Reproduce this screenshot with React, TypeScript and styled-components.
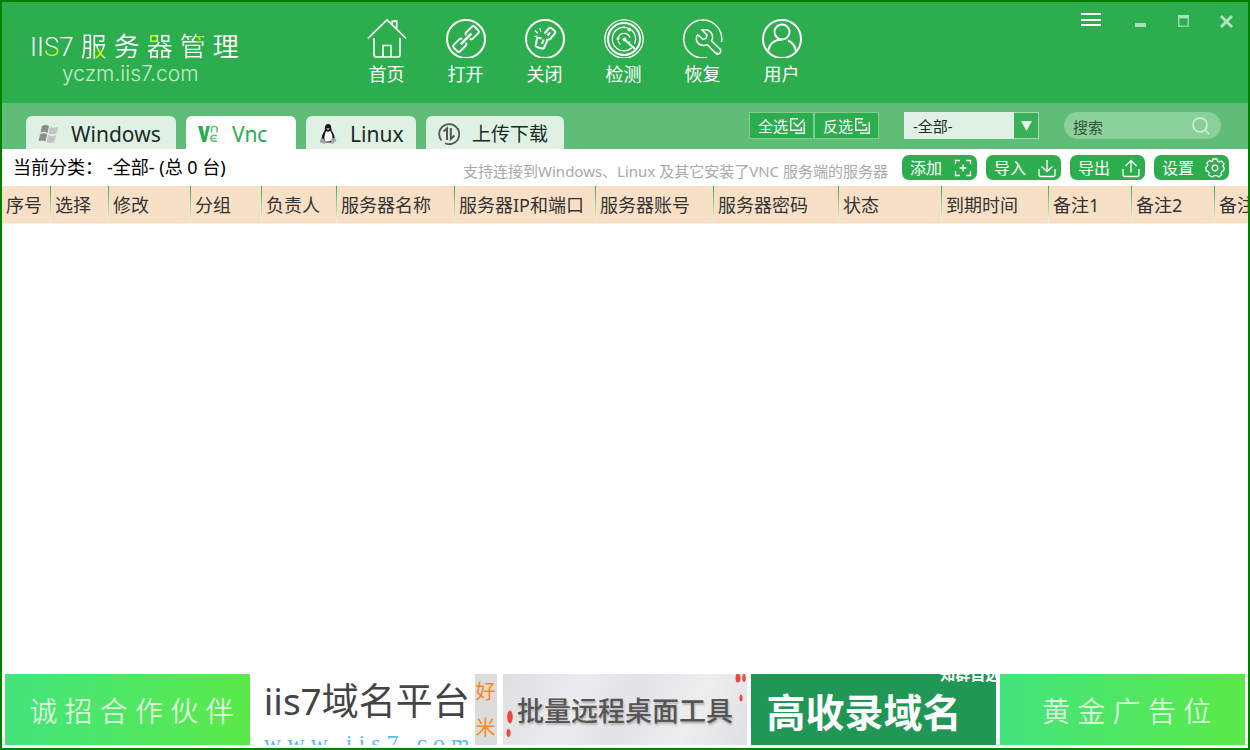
import React, { useState } from "react";
import styled, { createGlobalStyle, css } from "styled-components";

const GREEN = "#2dae4e";
const MINT = "#dff1e4";

const GlobalStyle = createGlobalStyle`
  *, *::before, *::after { box-sizing: border-box; }
  body { margin: 0; background: #fff; }
  body, button, input, select, table {
    font-family: "Noto Sans", "Noto Sans CJK SC", sans-serif;
  }
  button { border: 0; padding: 0; background: none; color: inherit; cursor: pointer; }
  svg { display: block; flex: none; }
`;

const Frame = styled.div`
  display: flex;
  flex-direction: column;
  min-height: 100vh;
  border: 2px solid #008000;
  overflow: hidden;
`;

/* ---------- header ---------- */

const Header = styled.header`
  display: flex;
  align-items: flex-start;
  height: 101px;
  background: ${GREEN};
  color: #fff;
`;

const Brand = styled.div`
  flex: none;
  width: 345px;
  padding: 26px 0 0 28px;
`;

const BrandName = styled.div`
  display: flex;
  gap: 7px;
  font-family: Roboto, "Noto Sans CJK SC", sans-serif;
  font-size: 26px;
  font-weight: 350;
  line-height: 38px;
  white-space: nowrap;
`;

const Accent = styled.span<{ $fill: string }>`
  background: ${(p) => p.$fill};
  background-clip: text;
  -webkit-background-clip: text;
  color: transparent;
`;

const BrandUrl = styled.div`
  padding-left: 32px;
  font-family: Inter, sans-serif;
  font-size: 21px;
  font-weight: 300;
  line-height: 16px;
  color: #c4ecce;
`;

const Nav = styled.nav`
  display: flex;
  padding-top: 16px;
`;

const NavButton = styled.button`
  display: flex;
  flex-direction: column;
  align-items: center;
  gap: 3px;
  width: 79px;
  font-size: 18px;
  line-height: 26px;
`;

const WindowControls = styled.div`
  display: flex;
  margin-left: auto;
`;

const ControlButton = styled.button<{ $wide?: boolean }>`
  display: flex;
  justify-content: center;
  width: ${(p) => (p.$wide ? 57 : 43)}px;
  padding-top: 8px;
`;

/* ---------- tab bar ---------- */

const TabBar = styled.div`
  display: flex;
  align-items: flex-end;
  height: 46px;
  padding: 0 27px 0 24px;
  background: #5fbd78;
`;

const Tabs = styled.div`
  display: flex;
  gap: 10px;
`;

const Tab = styled.button<{ $active: boolean; $width: number; $size?: number }>`
  display: flex;
  align-items: center;
  gap: 12px;
  width: ${(p) => p.$width}px;
  height: 33px;
  padding: 3px 0 0 12px;
  border-radius: 6px 6px 0 0;
  background: ${(p) => (p.$active ? "#fff" : MINT)};
  color: ${(p) => (p.$active ? GREEN : "#1c2b22")};
  font-size: ${(p) => p.$size ?? 21}px;
  line-height: 30px;
  white-space: nowrap;
`;

const Filters = styled.div`
  display: flex;
  align-items: center;
  gap: 25px;
  margin: 0 0 10px auto;
`;

const PickGroup = styled.div`
  display: flex;
`;

const PickButton = styled.button`
  display: flex;
  align-items: center;
  justify-content: center;
  gap: 1px;
  width: 65px;
  height: 27px;
  border: 1px solid #7fcb92;
  background: ${GREEN};
  color: #fff;
  font-size: 15px;
  line-height: 20px;
`;

const SelectBox = styled.div`
  position: relative;
  width: 135px;
  height: 27px;
`;

const GroupSelect = styled.select`
  width: 100%;
  height: 100%;
  padding: 0 30px 0 9px;
  border: 0;
  border-radius: 0;
  appearance: none;
  background: ${MINT};
  color: #1c2b22;
  font-size: 15px;
`;

const SelectArrow = styled.span`
  position: absolute;
  top: 0;
  right: 0;
  display: flex;
  align-items: center;
  justify-content: center;
  width: 25px;
  height: 27px;
  border: 1px solid #a5d9b2;
  border-left: 0;
  background: #38b058;
  pointer-events: none;
`;

const SearchBox = styled.label`
  display: flex;
  align-items: center;
  width: 157px;
  height: 27px;
  padding: 0 11px 0 9px;
  border-radius: 14px;
  background: #8ad09a;
`;

const SearchInput = styled.input`
  flex: 1;
  min-width: 0;
  padding: 2px 0 0;
  border: 0;
  outline: 0;
  background: none;
  color: #34523d;
  font-size: 15px;
  &::placeholder { color: #34523d; opacity: 1; }
`;

/* ---------- status row ---------- */

const StatusRow = styled.div`
  display: flex;
  align-items: center;
  height: 37px;
  padding: 0 19px 0 11px;
`;

const Category = styled.div`
  display: flex;
  gap: 4px;
  padding-bottom: 2px;
  font-size: 18px;
  line-height: 26px;
  color: #000;
  white-space: nowrap;
`;

const Hint = styled.div`
  margin-left: auto;
  padding: 6px 14px 0 0;
  font-size: 15px;
  line-height: 20px;
  color: #a9a9a9;
  white-space: nowrap;
`;

const Actions = styled.div`
  display: flex;
  gap: 9px;
`;

const ActionButton = styled.button`
  display: flex;
  align-items: center;
  justify-content: space-between;
  width: 75px;
  height: 25px;
  padding: 0 4px 0 8px;
  border-radius: 7px;
  background: ${GREEN};
  color: #fff;
  font-size: 16px;
  line-height: 24px;
`;

/* ---------- table ---------- */

const TableArea = styled.main`
  flex: 1;
  overflow: hidden;
`;

const ServerTable = styled.table`
  width: 1297px;
  table-layout: fixed;
  border-collapse: collapse;
`;

const HeadCell = styled.th<{ $width: number }>`
  width: ${(p) => p.$width}px;
  height: 37px;
  padding: 1px 0 0 4px;
  border-bottom: 1px solid #fbeee0;
  background:
    linear-gradient(${GREEN}, #f4f8ec) right / 1px 100% no-repeat,
    #f8e0c7;
  color: #333;
  font-size: 18px;
  font-weight: 400;
  line-height: 26px;
  text-align: left;
  white-space: nowrap;
`;

/* ---------- banners ---------- */

const Banners = styled.footer`
  display: grid;
  grid-template-columns: repeat(5, minmax(0, 1fr));
  gap: 4px;
  padding: 3px;
`;

const bannerBase = css`
  height: 71px;
  overflow: hidden;
  text-decoration: none;
  white-space: nowrap;
`;

const PlainBanner = styled.a`
  ${bannerBase}
  display: flex;
  align-items: center;
  justify-content: center;
  padding: 0 0 0 8px;
  background: linear-gradient(90deg, #43e47e, #5aea48);
  color: #dcfbdc;
  font-size: 28px;
  font-weight: 350;
`;

const DomainBanner = styled.a`
  ${bannerBase}
  display: flex;
  justify-content: space-between;
  padding: 0 2px 0 10px;
  background: #fff;
`;

const DomainText = styled.div`
  color: #444;
  font-size: 37px;
  line-height: 54px;
`;

const DomainUrl = styled.div`
  color: #5fb8ea;
  font-family: "Liberation Serif", serif;
  font-size: 24px;
  line-height: 30px;
`;

const DomainSide = styled.div`
  display: flex;
  flex-direction: column;
  align-items: center;
  width: 22px;
  background: #dcdcdc;
  color: #f58a1f;
  font-size: 20px;
  line-height: 36px;
`;

const ToolBanner = styled.a`
  ${bannerBase}
  display: flex;
  align-items: center;
  justify-content: space-between;
  background: linear-gradient(115deg, #dedfe1, #ececee 30%, #e3e3e8 50%, #eeeeee 75%, #dfe0e3);
  color: #555;
  font-size: 27px;
  font-weight: 500;
  text-shadow: 1px 2px 2px #b5b5b5;
`;

const SeoBanner = styled.a`
  ${bannerBase}
  position: relative;
  display: flex;
  align-items: center;
  padding: 0 0 0 15px;
  background: #219755;
  color: #fff;
  font-size: 39px;
  font-weight: 700;
`;

const SeoNote = styled.span`
  position: absolute;
  top: -8px;
  right: -4px;
  font-size: 15px;
  line-height: 16px;
`;

/* ---------- icons ---------- */

const Icon = ({ size = 40, w = 2, children }: { size?: number; w?: number; children: React.ReactNode }) => (
  <svg width={size} height={size} viewBox={`0 0 ${size} ${size}`} fill="none" stroke="currentColor" strokeWidth={w} aria-hidden="true">
    {children}
  </svg>
);

const navItems = [
  {
    label: "首页",
    icon: (
      <Icon w={1.7}>
        <path d="M.8 20.5 20 2l19.2 18.500M25.300 6V3.200h4.400V10.500M7 20v16.500q0 2.500 2.500 2.500h21q2.500 0 2.500-2.500V20M16 39V27.500h8V39" />
      </Icon>
    ),
  },
  {
    label: "打开",
    icon: (
      <Icon>
        <circle cx="20" cy="21" r="19" />
        <g transform="rotate(-45 20 21)" strokeWidth="1.900">
          <path d="M17 18.500V18q0-1.500-2-1.500H7.500q-2.300 0-2.300 2v5q0 2 2.300 2H15q2 0 2-1.500v-.5M23 18.500V18q0-1.500 2-1.500h7.500q2.300 0 2.300 2v5q0 2-2.300 2H25q-2 0-2-1.500v-.5" />
          <path d="M12.500 21h15" strokeWidth="2.600" />
        </g>
      </Icon>
    ),
  },
  {
    label: "关闭",
    icon: (
      <Icon>
        <circle cx="20" cy="21" r="19" />
        <path d="m19.500 15.500 4.300-5q1.200-1.300 2.600-.2l3.200 2.500q1.400 1.200.2 2.700l-4.500 5.300q-1.200 1.200-2.500.2M22.500 17.500l2.500-3" />
        <path d="m16.500 20.500-3-.8q-1.300-.2-1.500 1l-1.300 6.500q-.2 1.400 1.100 1.800l5.200 1.500q1.500.4 2.100-1l3-6.500q.4-1.300-.8-1.700M17 26l1.700-4.500" />
        <path d="m10 12.500 3 3M15 10l.8 4M9 18.500l3.500-.5" strokeWidth="1.200" />
      </Icon>
    ),
  },
  {
    label: "检测",
    icon: (
      <Icon w={1.300}>
        <circle cx="20" cy="21" r="19.200" />
        <circle cx="20" cy="21" r="16" strokeWidth="2" />
        <path d="M23.500 9.800A11.800 11.800 0 1 0 28 29.700M27.500 12A11.800 11.800 0 0 1 30.500 26M14.500 19a6.200 6.200 0 0 1 11.500.5M16.500 26.500a6.500 6.500 0 0 1-2.500-4M26 23.500l-.5 1" />
        <path d="m20.500 21.500 10.500 9.500" strokeWidth="1.800" />
        <g fill="currentColor" stroke="none">
          <circle cx="20.500" cy="21.500" r="2" />
          <circle cx="25.300" cy="11.500" r="1.900" />
          <circle cx="14" cy="20.500" r="1.500" />
        </g>
      </Icon>
    ),
  },
  {
    label: "恢复",
    icon: (
      <Icon w={1.500}>
        <path d="M24 39.500A19 19 0 1 1 38.500 24" />
        <path d="m14.500 16.500 5.500 5 3-1 1-3.500-5-5q8-1.500 10.300 5 .9 3.500-.6 6l8.300 8q1.700 2.500-.3 4.300-2 1.700-4.200-.2l-8-8.300q-6.500 2.200-10-2.300-2.300-3.500 0-8z" />
        <circle cx="34" cy="35.500" r=".6" />
      </Icon>
    ),
  },
  {
    label: "用户",
    icon: (
      <Icon>
        <circle cx="20" cy="21" r="19" />
        <circle cx="20" cy="14" r="7.500" />
        <path d="M6 33.500Q8 22 20 21.500M26 22.500q7 3 8 11" />
      </Icon>
    ),
  },
];

const WindowsIcon = () => (
  <svg width="21" height="20" viewBox="0 0 20 20" aria-hidden="true">
    <path d="M3.500 2q4-2 7 0L9 9Q6 7 2 8.500zM1.600 10q4-1.500 7 .3L7 17.500q-3-2-7-.3z" fill="#8d8d8d" />
    <path d="M11.500 3q4 1.500 8-.2L18 9.500q-4 1.500-8 0zM9.600 11q4 1.700 8 .2L16 18q-4 1.700-8 0z" fill="#c3c3c3" />
  </svg>
);

const VncIcon = () => (
  <svg width="22" height="20" viewBox="0 0 22 20" fill="none" aria-hidden="true">
    <path d="M0 2h4.500l2 10 2-10H12L8 18H4.500z" fill={GREEN} />
    <path d="M13.500 8.500V4.500q0-2 2-2h1.500q2 0 2 2v4M19 11.500h-3.500q-2.500 0-2.500 2.800t2.500 2.800H19" stroke="#62c27a" strokeWidth="1.600" />
    <path d="M12.500 14.300h6" stroke="#62c27a" />
  </svg>
);

const TuxIcon = () => (
  <svg width="20" height="20" viewBox="0 0 20 20" aria-hidden="true">
    <path d="M7 3q.5-3 3.200-3 3 0 3 4 0 2.500 2 5 2 3.500 1.500 6.500l-3 3H6.500L3.500 15Q3.500 11 5.800 8 7.200 6 7 3z" fill="#161616" />
    <path d="M8 7q2 1.500 4.300-.2Q15 11 14.500 15q-1.500 3-7 2.500Q5 14 8 7z" fill="#fff" />
    <path d="M8 4.500q2-1.200 4 0l-2 1.700z" fill="#aaa" />
    <path d="m2.500 15 2.500-.8 3.200 3.800q-.5 2-2.700 1.600L1.800 18.500zM13.500 14.500l3.500-.2 1.500 2.200-3.500 3q-2 .5-2.200-1z" fill="#a3a3a3" />
  </svg>
);

const TransferIcon = () => (
  <svg width="22" height="22" viewBox="0 0 22 22" fill="none" stroke="#555" strokeWidth="1.800" aria-hidden="true">
    <path d="M3.500 17.500A10 10 0 1 1 7 20.200" />
    <path d="M5.500 8.500 9 5.500V17M12.800 5v11L16.500 12.500" strokeWidth="2" />
  </svg>
);

const tabs = [
  { id: "windows", label: "Windows", icon: <WindowsIcon />, width: 150 },
  { id: "vnc", label: "Vnc", icon: <VncIcon />, width: 110 },
  { id: "linux", label: "Linux", icon: <TuxIcon />, width: 110 },
  { id: "transfer", label: "上传下载", icon: <TransferIcon />, width: 138, size: 19 },
];

const actions = [
  {
    label: "添加",
    icon: <path d="M2.500 6V2.500H7M13 2.500h4.500V6M17.500 13v4.500H13M7 17.500H2.500V13M10 6.500v7M6.500 10h7" />,
  },
  {
    label: "导入",
    icon: <path d="M2 11v5.500q0 2 2 2h12q2 0 2-2V11M10 2v11.500M4.500 8.500l5.500 5 5.500-5" />,
  },
  {
    label: "导出",
    icon: <path d="M2 11v5.500q0 2 2 2h12q2 0 2-2V11M10 14.500V2.500M4.500 8 10 2.500 15.500 8" />,
  },
  {
    label: "设置",
    icon: (
      <>
        <circle cx="10" cy="10" r="2.800" />
        <path d="M8 1h4l.6 2.300 1.600.8L16.300 3 19 5.800l-1.200 2 .5 1.400 1 .8-.9 3-1.600.5-.7 1.500.4 2L13.700 19l-1.700-1.400h-3L7.200 19 3.800 17.200l.3-2.200-1-1.500-2-.8L.8 9.300l1.600-1 .5-1.500-1-2L4.500 2.500l2 1 1-.5z" />
      </>
    ),
  },
];

const columns: [string, number][] = [
  ["序号", 49],
  ["选择", 58],
  ["修改", 82],
  ["分组", 71],
  ["负责人", 75],
  ["服务器名称", 118],
  ["服务器IP和端口", 141],
  ["服务器账号", 118],
  ["服务器密码", 125],
  ["状态", 103],
  ["到期时间", 107],
  ["备注1", 83],
  ["备注2", 83],
  ["备注3", 84],
];

export default function App() {
  const [active, setActive] = useState("vnc");
  return (
    <>
      <GlobalStyle />
      <Frame>
        <Header>
          <Brand>
            <BrandName>
              <span>
                II<Accent $fill="linear-gradient(#fff 50%, #d4f51c 60%)">S</Accent>7
              </span>
              <Accent $fill="radial-gradient(circle at 72% 68%, #d4f51c 5px, #fff 6px)">服</Accent>
              <span>务</span>
              <Accent $fill="radial-gradient(circle at 20% 30%, #d4f51c 5px, #fff 6px)">器</Accent>
              <Accent $fill="radial-gradient(circle at 75% 28%, #b4ee1c 4px, #fff 5px)">管</Accent>
              <span>理</span>
            </BrandName>
            <BrandUrl>yczm.iis7.com</BrandUrl>
          </Brand>
          <Nav>
            {navItems.map((item) => (
              <NavButton key={item.label} type="button">
                {item.icon}
                {item.label}
              </NavButton>
            ))}
          </Nav>
          <WindowControls>
            <ControlButton type="button" aria-label="菜单" $wide>
              <svg width="20" height="20" viewBox="0 0 20 20" stroke="#fff" strokeWidth="2">
                <path d="M0 4h20M0 10h20M0 15h20" />
              </svg>
            </ControlButton>
            <ControlButton type="button" aria-label="最小化">
              <svg width="11" height="20" viewBox="0 0 11 20" fill="#abdfb8">
                <path d="M0 13h11v4H0z" />
              </svg>
            </ControlButton>
            <ControlButton type="button" aria-label="最大化">
              <svg width="11" height="20" viewBox="0 0 11 20">
                <path d="M.8 6v10.200h9.400V6" stroke="#8ed29f" strokeWidth="1.600" fill="none" />
                <path d="M0 5h11v3.500H0z" fill="#abdfb8" />
              </svg>
            </ControlButton>
            <ControlButton type="button" aria-label="关闭窗口">
              <svg width="13" height="20" viewBox="0 0 13 20" stroke="#b4e3c0" strokeWidth="3">
                <path d="m1 6 11 11M12 6 1 17" />
              </svg>
            </ControlButton>
          </WindowControls>
        </Header>

        <TabBar>
          <Tabs role="tablist">
            {tabs.map((tab) => (
              <Tab
                key={tab.id}
                type="button"
                role="tab"
                aria-selected={tab.id === active}
                $active={tab.id === active}
                $width={tab.width}
                $size={tab.size}
                onClick={() => setActive(tab.id)}
              >
                {tab.icon}
                {tab.label}
              </Tab>
            ))}
          </Tabs>
          <Filters>
            <PickGroup>
              <PickButton type="button">
                全选
                <Icon size={16} w={1.400}>
                  <path d="M9 .7H1.700V12.300H12.500V9M4.500 4.500l4 4L15 1.500M15.300 4v11.300H6" />
                </Icon>
              </PickButton>
              <PickButton type="button">
                反选
                <Icon size={16} w={1.400}>
                  <path d="M9 .7H1.700V12.300H12.500V9M4 4.500h4.500M8 7h4.500M15.300 4v11.300H6" />
                </Icon>
              </PickButton>
            </PickGroup>
            <SelectBox>
              <GroupSelect aria-label="分组">
                <option>-全部-</option>
              </GroupSelect>
              <SelectArrow>
                <svg width="11" height="10" viewBox="0 0 11 10" fill="#e6f5ea">
                  <path d="M0 0h11L5.500 10z" />
                </svg>
              </SelectArrow>
            </SelectBox>
            <SearchBox>
              <SearchInput type="text" placeholder="搜索" aria-label="搜索" />
              <svg width="18" height="18" viewBox="0 0 18 18" fill="none" stroke="#d3eeda" strokeWidth="1.600">
                <circle cx="8" cy="8" r="7" />
                <path d="m13 13 4 4" />
              </svg>
            </SearchBox>
          </Filters>
        </TabBar>

        <StatusRow>
          <Category>
            <span>当前分类：</span>
            <span>-全部- (总 0 台)</span>
          </Category>
          <Hint>支持连接到Windows、Linux 及其它安装了VNC 服务端的服务器</Hint>
          <Actions>
            {actions.map((action) => (
              <ActionButton key={action.label} type="button">
                {action.label}
                <Icon size={20} w={1.300}>
                  {action.icon}
                </Icon>
              </ActionButton>
            ))}
          </Actions>
        </StatusRow>

        <TableArea>
          <ServerTable>
            <thead>
              <tr>
                {columns.map(([name, width]) => (
                  <HeadCell key={name} scope="col" $width={width}>
                    {name}
                  </HeadCell>
                ))}
              </tr>
            </thead>
          </ServerTable>
        </TableArea>

        <Banners>
          <PlainBanner href="#partner">诚 招 合 作 伙 伴</PlainBanner>
          <DomainBanner href="#domain">
            <div>
              <DomainText>iis7域名平台</DomainText>
              <DomainUrl>w w w . i i s 7 . c o m</DomainUrl>
            </div>
            <DomainSide>
              <span>好</span>
              <span>米</span>
            </DomainSide>
          </DomainBanner>
          <ToolBanner href="#tools">
            <svg width="12" height="71" viewBox="0 0 12 71" fill="#f0483c">
              <ellipse cx="7" cy="43" rx="2.800" ry="6.500" />
              <ellipse cx="5.500" cy="59" rx="2" ry="4" />
            </svg>
            批量远程桌面工具
            <svg width="12" height="71" viewBox="0 0 12 71" fill="#f0483c">
              <ellipse cx="3" cy="4" rx="2.500" ry="4.500" />
              <ellipse cx="9" cy="4" rx="1.700" ry="4" />
              <ellipse cx="6" cy="24" rx="1.500" ry="3.500" />
            </svg>
          </ToolBanner>
          <SeoBanner href="#seo">
            高收录域名
            <SeoNote>知群自选</SeoNote>
          </SeoBanner>
          <PlainBanner href="#ads">黄 金 广 告 位</PlainBanner>
        </Banners>
      </Frame>
    </>
  );
}
